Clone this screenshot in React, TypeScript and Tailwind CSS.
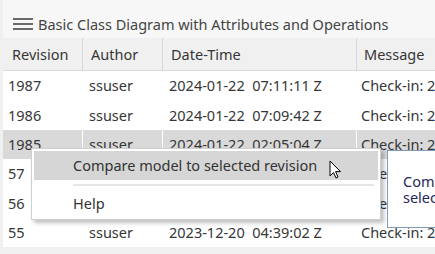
import React from "react";

const rows = [
  { rev: "1987", author: "ssuser", dt: "2024-01-22\u00a0\u00a007:11:11 Z", msg: "Check-in: 2", sel: false },
  { rev: "1986", author: "ssuser", dt: "2024-01-22\u00a0\u00a007:09:42 Z", msg: "Check-in: 2", sel: false },
  { rev: "1985", author: "ssuser", dt: "2024-01-22\u00a0\u00a002:05:04 Z", msg: "Check-in: 2", sel: true },
  { rev: "57", author: "ssuser", dt: "2023-12-20\u00a0\u00a004:41:10 Z", msg: "Check-in: 2", sel: false },
  { rev: "56", author: "ssuser", dt: "2023-12-20\u00a0\u00a004:40:21 Z", msg: "Check-in: 2", sel: false },
  { rev: "55", author: "ssuser", dt: "2023-12-20\u00a0\u00a004:39:02 Z", msg: "Check-in: 2", sel: false },
];

export default function App() {
  return (
    <div
      className="relative w-[435px] h-[254px] overflow-hidden bg-[#f0f0f0] text-[14.5px] text-[#363636]"
      style={{ fontFamily: '"Noto Sans", "Open Sans", sans-serif' }}
    >
      <div className="h-[38px] ml-[3px] bg-[#f7f7f7] flex items-end pb-[2px]">
        <div className="flex flex-col gap-[3px] ml-[10px] mr-[5px] mb-[6px]">
          <div className="w-[20px] h-[2px] bg-[#6a6a6a]" />
          <div className="w-[20px] h-[2px] bg-[#6a6a6a]" />
          <div className="w-[20px] h-[2px] bg-[#6a6a6a]" />
        </div>
        <span className="whitespace-nowrap text-[#444]">Basic Class Diagram with Attributes and Operations</span>
      </div>
      <div className="grid grid-cols-[80px_80px_194px_1fr] ml-[3px] h-[33px] border-b border-[#dadada] bg-[#f0f0f0]">
        <div className="flex items-center pt-[2px] pl-[9px] border-r border-[#d9d9d9]">Revision</div>
        <div className="flex items-center pt-[2px] pl-[8px] border-r border-[#d9d9d9]">Author</div>
        <div className="flex items-center pt-[2px] pl-[8px] border-r border-[#d9d9d9]">Date-Time</div>
        <div className="flex items-center pt-[2px] pl-[7px] whitespace-nowrap">Message</div>
      </div>
      <div className="ml-[3px] bg-white">
        {rows.map((r) => (
          <div
            key={r.rev}
            className={`grid grid-cols-[80px_80px_194px_1fr] h-[29.4px] whitespace-nowrap ${r.sel ? "bg-[#d9d9d9]" : "bg-white"}`}
          >
            <div className={`flex items-center pt-[1px] pl-[5px] ${r.sel ? "border-r border-white" : ""}`}>{r.rev}</div>
            <div className={`flex items-center pt-[1px] pl-[6px] ${r.sel ? "border-r border-white" : ""}`}>{r.author}</div>
            <div className={`flex items-center pt-[1px] pl-[6px] ${r.sel ? "border-r border-white" : ""}`}>{r.dt}</div>
            <div className="flex items-center pt-[1px] pl-[4px] overflow-hidden">{r.msg}</div>
          </div>
        ))}
      </div>

      {/* context menu */}
      <div className="absolute left-[31px] top-[148px] w-[350px] h-[72px] bg-white border border-[#cfcfcf] shadow-[3px_3px_4px_rgba(0,0,0,0.25)] p-[2px]">
        <div className="h-[29px] bg-[#d6d6d6] flex items-center pl-[39px] whitespace-nowrap text-[#333]">
          Compare model to selected revision
        </div>
        <div className="h-[9px] flex items-center pl-[39px] pr-[4px]">
          <div className="h-[2px] w-full bg-[#e6e6e6]" />
        </div>
        <div className="h-[29px] flex items-center pl-[39px] text-[#333]">Help</div>
      </div>

      {/* tooltip */}
      <div className="absolute left-[387px] top-[150px] w-[48px] h-[78px] overflow-hidden bg-white border-l border-t border-b border-[#7f9db9] pl-[15px] pt-[22px] text-[#24285a] leading-[16px] whitespace-nowrap">
        <div>Comp</div>
        <div>selec</div>
      </div>

      {/* cursor */}
      <svg className="absolute left-[329px] top-[160px]" width="13" height="20" viewBox="0 0 13 20">
        <path d="M1 1 L1 16 L4.5 12.5 L7 18 L9 17 L6.6 11.6 L11.5 11.6 Z" fill="white" stroke="black" strokeWidth="1" strokeLinejoin="miter" />
      </svg>
    </div>
  );
}
